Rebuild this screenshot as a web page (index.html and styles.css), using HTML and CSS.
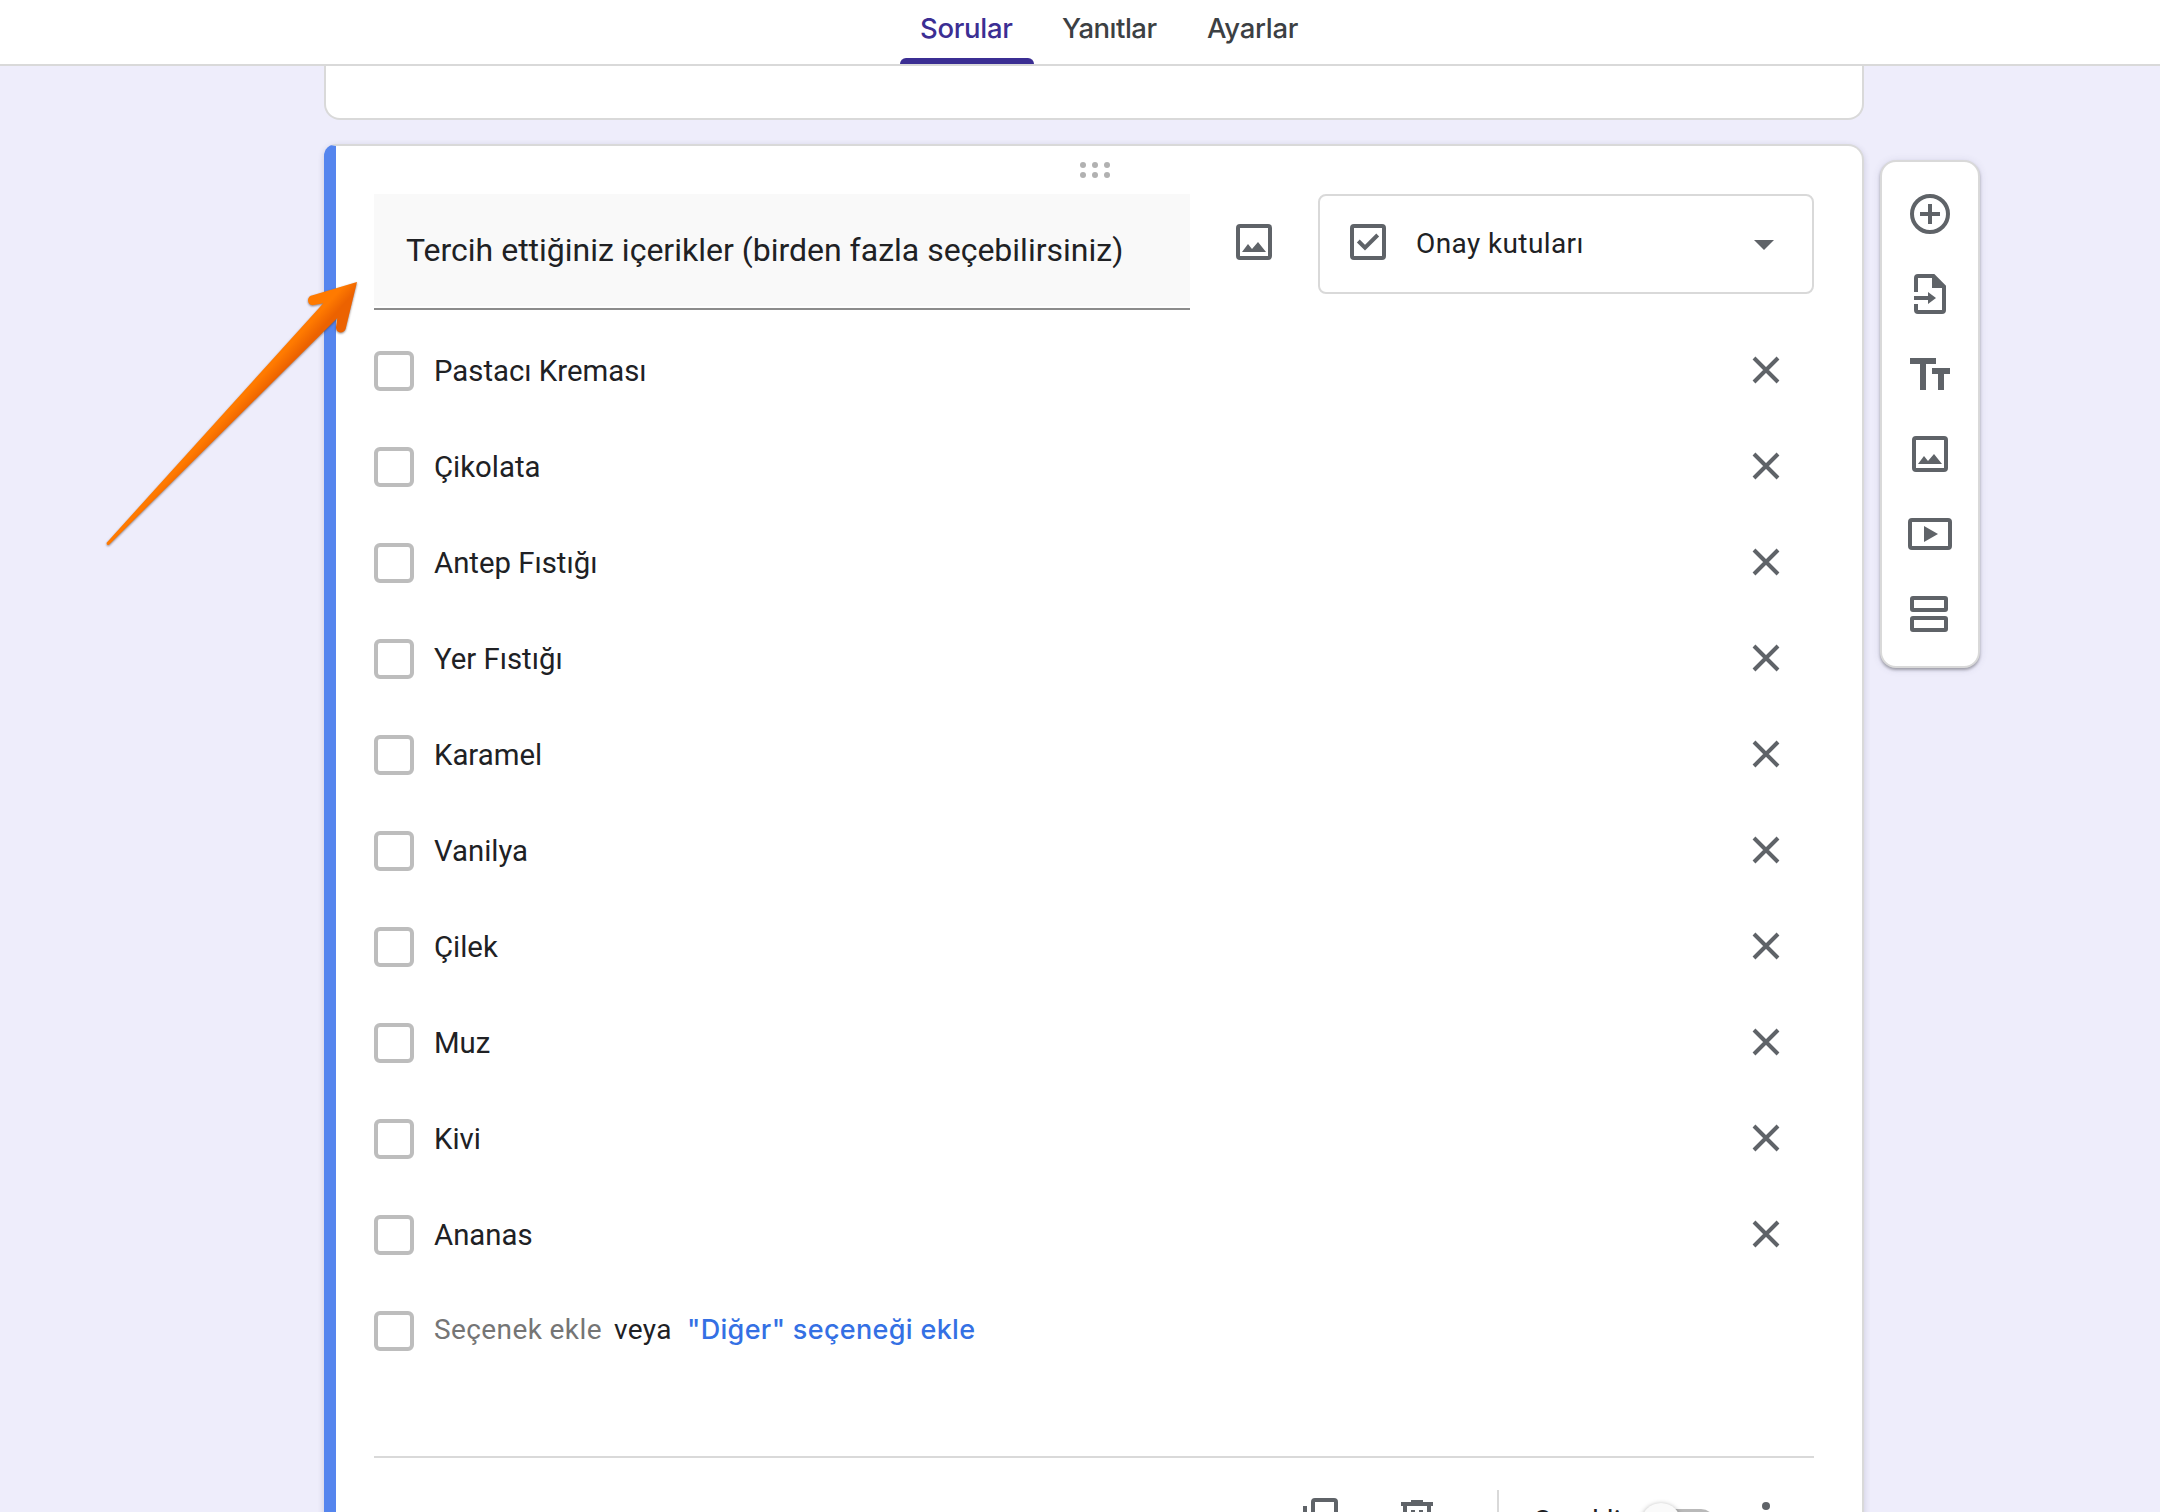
FILE: index.html
```html
<!DOCTYPE html>
<html lang="tr">
<head>
<meta charset="utf-8">
<title>Form</title>
<link rel="stylesheet" href="styles.css">
</head>
<body>
<header class="tabs">
  <a class="tab tab-active">Sorular</a>
  <a class="tab tab-answers">Yanıtlar</a>
  <a class="tab tab-settings">Ayarlar</a>
</header>
<main class="canvas">
  <div class="column">
    <section class="card card-previous"></section>
    <section class="card card-question">
      <div class="drag"><svg width="30" height="16" viewBox="0 0 30 16" fill="#b1b1b1"><circle cx="3" cy="3" r="3"/><circle cx="15" cy="3" r="3"/><circle cx="27" cy="3" r="3"/><circle cx="3" cy="13" r="3"/><circle cx="15" cy="13" r="3"/><circle cx="27" cy="13" r="3"/></svg></div>
      <div class="question">
        <div class="title"><span>Tercih ettiğiniz içerikler (birden fazla seçebilirsiniz)</span></div>
        <svg class="icon add-image" width="36" height="36" viewBox="0 0 36 36"><rect x="2" y="2" width="32" height="32" rx="2"/><path class="fill" d="M6 28l6-8 4 5 6-7 8 10z"/></svg>
        <div class="select">
          <svg class="icon" width="36" height="36" viewBox="0 0 36 36"><rect x="2" y="2" width="32" height="32" rx="2"/><path d="M8.3 17l6.7 6.7L27.7 11"/></svg>
          <span class="select-label">Onay kutuları</span>
          <svg class="caret" width="20" height="10" viewBox="0 0 20 10"><path d="M0 0h20L10 10z"/></svg>
        </div>
      </div>
      <ul class="options">
        <li class="option"><i class="box"></i><span>Pastacı Kreması</span><svg class="icon close" width="28" height="28" viewBox="0 0 28 28"><path d="M2 2l24 24M26 2L2 26"/></svg></li>
        <li class="option"><i class="box"></i><span>Çikolata</span><svg class="icon close" width="28" height="28" viewBox="0 0 28 28"><path d="M2 2l24 24M26 2L2 26"/></svg></li>
        <li class="option"><i class="box"></i><span>Antep Fıstığı</span><svg class="icon close" width="28" height="28" viewBox="0 0 28 28"><path d="M2 2l24 24M26 2L2 26"/></svg></li>
        <li class="option"><i class="box"></i><span>Yer Fıstığı</span><svg class="icon close" width="28" height="28" viewBox="0 0 28 28"><path d="M2 2l24 24M26 2L2 26"/></svg></li>
        <li class="option"><i class="box"></i><span>Karamel</span><svg class="icon close" width="28" height="28" viewBox="0 0 28 28"><path d="M2 2l24 24M26 2L2 26"/></svg></li>
        <li class="option"><i class="box"></i><span>Vanilya</span><svg class="icon close" width="28" height="28" viewBox="0 0 28 28"><path d="M2 2l24 24M26 2L2 26"/></svg></li>
        <li class="option"><i class="box"></i><span>Çilek</span><svg class="icon close" width="28" height="28" viewBox="0 0 28 28"><path d="M2 2l24 24M26 2L2 26"/></svg></li>
        <li class="option"><i class="box"></i><span>Muz</span><svg class="icon close" width="28" height="28" viewBox="0 0 28 28"><path d="M2 2l24 24M26 2L2 26"/></svg></li>
        <li class="option"><i class="box"></i><span>Kivi</span><svg class="icon close" width="28" height="28" viewBox="0 0 28 28"><path d="M2 2l24 24M26 2L2 26"/></svg></li>
        <li class="option"><i class="box"></i><span>Ananas</span><svg class="icon close" width="28" height="28" viewBox="0 0 28 28"><path d="M2 2l24 24M26 2L2 26"/></svg></li>
        <li class="option option-new"><i class="box"></i><span class="add">Seçenek ekle</span><span class="or">veya</span><a class="other">"Diğer" seçeneği ekle</a></li>
      </ul>
      <footer class="actions">
        <svg class="icon copy" width="36" height="40" viewBox="0 0 36 40"><rect x="10" y="2" width="23" height="28" rx="2"/><path d="M2 8v28a2 2 0 0 0 2 2h22"/></svg>
        <svg class="icon trash" width="32" height="36" viewBox="0 0 32 36"><path class="fill" d="M10 0h12v2h10v4H0V2h10z"/><path d="M4 5v27a2 2 0 0 0 2 2h20a2 2 0 0 0 2-2V5M12 10v18M20 10v18"/></svg>
        <i class="split"></i>
        <span class="required">Gerekli</span>
        <span class="toggle"><i class="thumb"></i></span>
        <svg class="more" width="8" height="32" viewBox="0 0 8 32"><circle cx="4" cy="4" r="4"/><circle cx="4" cy="16" r="4"/><circle cx="4" cy="28" r="4"/></svg>
      </footer>
    </section>
  </div>
  <nav class="toolbar">
    <svg class="icon" width="44" height="40" viewBox="0 0 44 40"><circle cx="22" cy="20" r="18"/><path d="M22 10v20M12 20h20"/></svg>
    <svg class="icon" width="44" height="40" viewBox="0 0 44 40"><path d="M8 18V4a2 2 0 0 1 2-2h15.500L36 12.500V36a2 2 0 0 1-2 2H10a2 2 0 0 1-2-2v-6M6 24h16"/><path class="fill" d="M24 2l12 12H24zM20 18l8 6-8 6z"/></svg>
    <svg class="icon" width="44" height="40" viewBox="0 0 44 40"><path class="fill" d="M2 4h26v6h-10v26h-6V10H2zM24 14h18v6h-6v16h-6V20h-6z"/></svg>
    <svg class="icon" width="44" height="40" viewBox="0 0 44 40"><rect x="6" y="4" width="32" height="32" rx="2"/><path class="fill" d="M10 30l6-8 4 5 6-7 8 10z"/></svg>
    <svg class="icon" width="44" height="40" viewBox="0 0 44 40"><rect x="2" y="6" width="40" height="28" rx="2"/><path class="fill" d="M16 12l14 8-14 8z"/></svg>
    <svg class="icon" width="44" height="40" viewBox="0 0 44 40"><rect x="4" y="4" width="34" height="12" rx="1"/><rect x="4" y="24" width="34" height="12" rx="1"/></svg>
  </nav>
</main>
<svg class="arrow" width="290" height="300" viewBox="0 0 870 900">
  <defs><linearGradient id="g" gradientUnits="userSpaceOnUse" x1="395" y1="425" x2="450" y2="475"><stop offset="0.5" stop-color="#ff7a00"/><stop offset="1" stop-color="#ec6200"/></linearGradient></defs>
  <path d="M801 66L767 206Q762 219 748 217Q738 214 738 202L742 174L57 854Q49 857 50 848L700 130L668 136Q654 134 654 120Q655 108 668 106Z" fill="url(#g)"/>
</svg>
</body>
</html>
```
FILE: styles.css
```css
* { box-sizing: border-box; }
body {
  margin: 0;
  height: 1512px;
  overflow: hidden;
  position: relative;
  background: #eeedfb;
  color: #202124;
  font: 28px/40px Roboto, sans-serif;
}
svg { display: block; flex: none; }
.icon { fill: none; stroke: #5f6368; stroke-width: 4; }
.icon .fill { fill: #5f6368; stroke: none; }
.tabs {
  display: flex;
  height: 66px;
  padding-left: 900px;
  background: #fff;
  border-bottom: 2px solid #d9d9d9;
}
.tab {
  height: 64px;
  padding-top: 8px;
  font: 500 27.5px/40px Inter, sans-serif;
  letter-spacing: -0.3px;
  color: #3c4043;
  white-space: nowrap;
}
.tab-active {
  position: relative;
  width: 134px;
  padding-left: 20px;
  color: #3b2e93;
}
.tab-active::after {
  content: "";
  position: absolute;
  left: 0;
  bottom: 0;
  width: 134px;
  height: 6px;
  border-radius: 6px 6px 0 0;
  background: #3b2e93;
}
.tab-answers { width: 145px; margin-left: 28px; letter-spacing: -0.5px; }
.canvas {
  display: flex;
  align-items: flex-start;
  gap: 16px;
  height: 1446px;
  padding-left: 324px;
  overflow: hidden;
}
.column { width: 1540px; }
.card { background: #fff; border: 2px solid #d9d9d9; }
.card-previous {
  height: 54px;
  border-top: 0;
  border-radius: 0 0 16px 16px;
}
.card-question {
  height: 1440px;
  margin-top: 24px;
  padding-left: 38px;
  border-left: 12px solid #5585ee;
  border-top-left-radius: 12px;
  border-top-right-radius: 16px;
  box-shadow: 0 2px 6px rgba(60, 60, 100, .2);
}
.drag {
  display: flex;
  justify-content: center;
  width: 1442px;
  height: 48px;
  padding-top: 16px;
}
.question { display: flex; width: 1440px; height: 116px; }
.title {
  width: 816px;
  height: 116px;
  padding: 36px 0 0 32px;
  background: linear-gradient(#f9f9f9, #f9f9f9) top / 100% 112px no-repeat;
  border-bottom: 2px solid #8c8c8c;
  font-size: 32px;
  white-space: nowrap;
}
.add-image { margin: 30px 46px 0; }
.select {
  display: flex;
  align-items: flex-start;
  width: 496px;
  height: 100px;
  padding: 28px 38px 0 30px;
  border: 2px solid #d9d9d9;
  border-radius: 8px;
}
.select-label { margin-left: 30px; letter-spacing: .4px; }
.caret { margin: 16px 0 0 auto; fill: #5f6368; }
.options {
  width: 1440px;
  margin: 13px 0 0;
  padding: 0;
  list-style: none;
}
.option { display: flex; align-items: center; height: 96px; font-size: 29.33px; }
.box {
  width: 40px;
  height: 40px;
  margin-right: 20px;
  border: 4px solid #bdbdbd;
  border-radius: 6px;
}
.close { margin: 0 34px 2px auto; }
.option-new { font-size: 28px; }
.option-new span, .option-new a { padding-bottom: 3px; white-space: nowrap; }
.add { width: 180px; color: #757575; letter-spacing: .4px; }
.or { width: 73px; letter-spacing: .4px; }
.other {
  font: 500 27px/40px Inter, sans-serif;
  letter-spacing: .33px;
  color: #3470e4;
}
.actions {
  display: flex;
  align-items: flex-start;
  width: 1440px;
  margin-top: 77px;
  padding: 32px 0 0 928px;
  border-top: 2px solid #d9d9d9;
}
.copy { margin: 8px 0 0 1px; }
.trash { margin: 10px 0 0 62px; }
.split { width: 2px; height: 64px; margin-left: 64px; background: #d9d9d9; }
.required { margin: 11px 0 0 34px; width: 88px; letter-spacing: .3px; }
.toggle {
  width: 68px;
  height: 28px;
  margin: 19px 0 0 26px;
  border-radius: 14px;
  background: #b9b9b9;
}
.thumb {
  display: block;
  width: 40px;
  height: 40px;
  margin: -6px 0 0 -6px;
  border-radius: 50%;
  background: #fafafa;
  box-shadow: 0 1px 5px rgba(0, 0, 0, .35);
}
.more { margin: 12px 0 0 47px; fill: #5f6368; }
.toolbar {
  display: flex;
  flex-direction: column;
  align-items: center;
  gap: 40px;
  width: 100px;
  height: 508px;
  margin-top: 94px;
  padding-top: 32px;
  background: #fff;
  border: 2px solid #d9d9d9;
  border-radius: 16px;
  box-shadow: 0 2px 3px rgba(0, 0, 0, .3), 0 1px 8px rgba(60, 60, 100, .12);
}
.arrow {
  position: absolute;
  left: 90px;
  top: 260px;
  filter: drop-shadow(0 1px 1px rgba(70, 50, 50, .6));
}
```
